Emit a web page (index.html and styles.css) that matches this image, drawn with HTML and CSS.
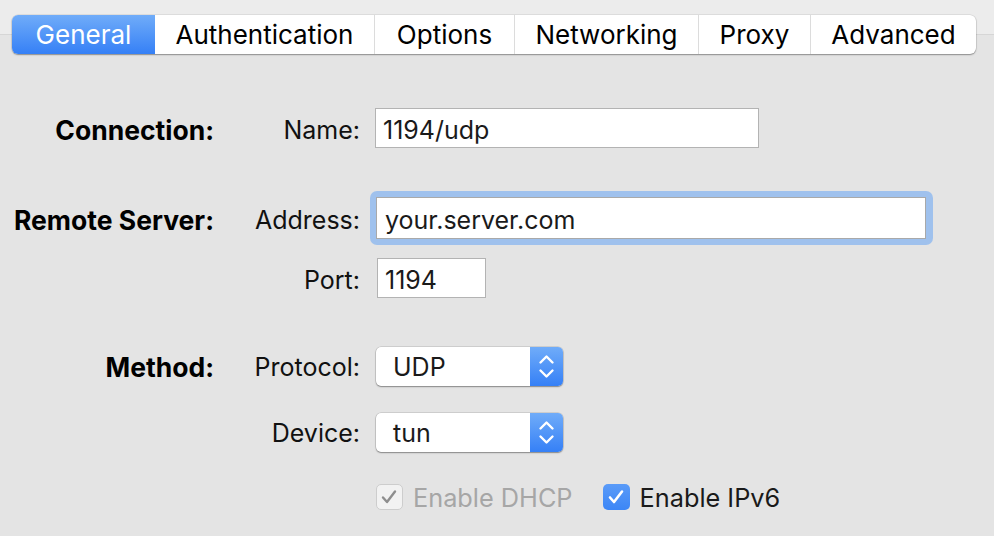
FILE: index.html
```html
<!DOCTYPE html>
<html>
<head>
<meta charset="utf-8">
<link rel="stylesheet" href="styles.css">
</head>
<body>
<div class="tabs">
  <div class="tab tab-sel t-general">General</div>
  <div class="tab t-auth">Authentication</div>
  <div class="tab t-options">Options</div>
  <div class="tab t-net">Networking</div>
  <div class="tab t-proxy">Proxy</div>
  <div class="tab t-adv">Advanced</div>
</div>
<div class="form">
  <div class="row r-name">
    <div class="sec">Connection:</div>
    <div class="lbl">Name:</div>
    <div class="field f-name">1194/udp</div>
  </div>
  <div class="row r-addr">
    <div class="sec">Remote Server:</div>
    <div class="lbl">Address:</div>
    <div class="ring"><div class="field f-addr">your.server.com</div></div>
  </div>
  <div class="row r-port">
    <div class="sec"></div>
    <div class="lbl">Port:</div>
    <div class="field f-port">1194</div>
  </div>
  <div class="row r-proto">
    <div class="sec">Method:</div>
    <div class="lbl">Protocol:</div>
    <div class="popup">
      <span class="popup-text">UDP</span>
      <span class="popup-arrows">
        <svg width="33" height="39" viewBox="0 0 33 39"><path d="M10.5 15.5 L16.5 9.5 L22.5 15.5 M10.5 23.5 L16.5 29.5 L22.5 23.5" fill="none" stroke="#fff" stroke-width="2.4" stroke-linecap="round" stroke-linejoin="round"/></svg>
      </span>
    </div>
  </div>
  <div class="row r-dev">
    <div class="sec"></div>
    <div class="lbl">Device:</div>
    <div class="popup">
      <span class="popup-text">tun</span>
      <span class="popup-arrows">
        <svg width="33" height="39" viewBox="0 0 33 39"><path d="M10.5 15.5 L16.5 9.5 L22.5 15.5 M10.5 23.5 L16.5 29.5 L22.5 23.5" fill="none" stroke="#fff" stroke-width="2.4" stroke-linecap="round" stroke-linejoin="round"/></svg>
      </span>
    </div>
  </div>
  <div class="row r-check">
    <div class="sec"></div>
    <div class="lbl"></div>
    <div class="check check-off">
      <span class="box box-dis"><svg width="26" height="26" viewBox="0 0 26 26"><path d="M7 13.5 L11 18 L19 7.5" fill="none" stroke="#8e8e8e" stroke-width="2.4" stroke-linecap="round" stroke-linejoin="round"/></svg></span>
      <span class="check-label dis">Enable DHCP</span>
    </div>
    <div class="check">
      <span class="box box-on"><svg width="26" height="26" viewBox="0 0 26 26"><path d="M7 13.5 L11 18 L19 7.5" fill="none" stroke="#fff" stroke-width="2.6" stroke-linecap="round" stroke-linejoin="round"/></svg></span>
      <span class="check-label">Enable IPv6</span>
    </div>
  </div>
</div>
</body>
</html>
```
FILE: styles.css
```css
* { box-sizing: border-box; }
html, body { margin: 0; padding: 0; }
body {
  width: 994px;
  height: 536px;
  overflow: hidden;
  background: linear-gradient(#ececec 0, #ececec 34px, #d6d6d6 34px, #d6d6d6 35px, #e4e4e4 35px);
  font-family: Inter, "Helvetica Neue", "Liberation Sans", sans-serif;
  font-size: 25px;
  color: #000;
}
.tabs {
  display: flex;
  margin: 15px 0 0 12px;
  width: 964px;
  height: 39px;
  background: #fff;
  border-radius: 6px;
  box-shadow: 0 0 0 0.5px rgba(0,0,0,0.12), 0 1px 1.5px rgba(0,0,0,0.35);
}
.tab {
  display: flex;
  align-items: center;
  justify-content: center;
  border-left: 1.5px solid #dcdcdc;
  height: 100%;
  flex: none;
  font-size: 26px;
}
.tab-sel {
  border-left: none;
  border-radius: 6px 0 0 6px;
  background: linear-gradient(#70acf9, #3580f6);
  color: #fff;
}
.tab-sel + .tab { border-left: none; }
.t-general { width: 143px; }
.t-auth { width: 219px; }
.t-options { width: 140px; }
.t-net { width: 184px; }
.t-proxy { width: 112px; }
.t-adv { width: 166px; }

.form { margin-top: 54px; }
.row { display: flex; align-items: center; }
.sec {
  width: 214px;
  flex: none;
  text-align: right;
  font-weight: 700;
  font-size: 26.5px;
  padding-top: 4px;
}
.lbl {
  width: 146px;
  flex: none;
  text-align: right;
  margin-right: 16px;
  color: #111;
  padding-top: 4px;
}
.r-proto .sec, .r-proto .lbl, .r-dev .lbl { padding-top: 0; }
.r-name { height: 40px; }
.r-addr { height: 42px; margin-top: 49px; }
.r-port { height: 40px; margin-top: 19px; }
.r-proto { height: 39px; margin-top: 49px; }
.r-dev { height: 39px; margin-top: 27px; }
.r-check { height: 26px; margin-top: 32px; }

.field {
  background: #fff;
  border: 1px solid #b3b3b3;
  display: flex;
  align-items: center;
  padding-left: 7px;
  padding-top: 3px;
  color: #1a1a1a;
}
.f-name { width: 384px; height: 40px; margin-left: -1px; }
.ring {
  margin: -6px 0 -6px -6px;
  padding: 6px 7px 6px 6px;
  background: #9fc1ed;
  border-radius: 7px;
}
.f-addr { width: 550px; height: 42px; border-color: #a9a9a9; padding-left: 8px; }
.f-port { width: 109px; height: 40px; margin-left: 1px; }

.popup {
  display: flex;
  width: 187px;
  height: 39px;
  background: #fff;
  border-radius: 5px;
  box-shadow: 0 0 0 0.5px rgba(0,0,0,0.18), 0 1px 1.5px rgba(0,0,0,0.35);
  overflow: hidden;
}
.popup-text {
  flex: 1;
  display: flex;
  align-items: center;
  padding-left: 17px;
  padding-top: 1px;
  color: #1a1a1a;
}
.popup-arrows {
  width: 33px;
  height: 39px;
  flex: none;
  background: linear-gradient(#70acf9, #3580f6);
}
.popup-arrows svg { display: block; }

.check { display: flex; align-items: center; }
.check-off { margin-right: 30px; }
.box {
  width: 27px;
  height: 26px;
  border-radius: 5px;
  margin-right: 10px;
  flex: none;
}
.box svg { display: block; }
.box-dis {
  background: #f2f2f2;
  border: 1px solid #cdcdcd;
}
.box-dis svg { margin: -1px; }
.box-on {
  background: linear-gradient(#5a9bf8, #3c86f6);
}
.check-label { color: #1a1a1a; font-size: 25.3px; }
.check-label.dis { color: #a6a6a6; }
```
